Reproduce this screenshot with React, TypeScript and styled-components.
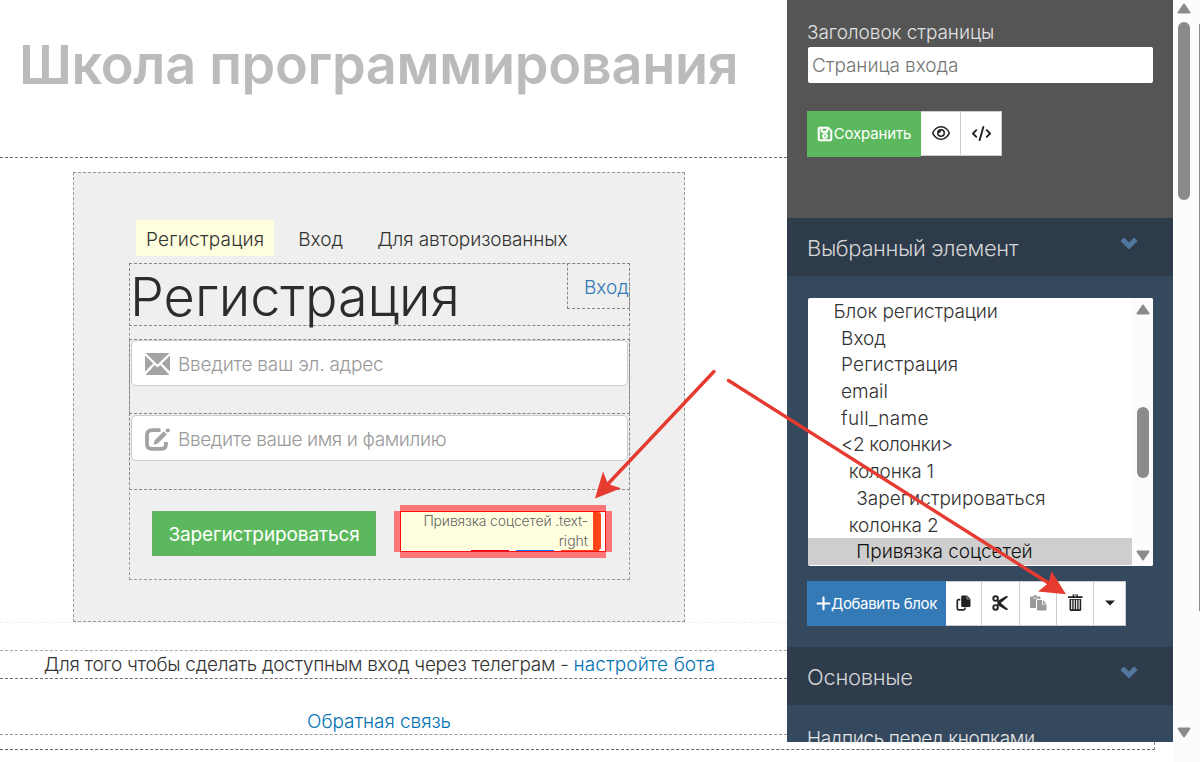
import React from 'react';
import styled, { createGlobalStyle, css } from 'styled-components';
import { FaCode, FaPlus, FaRegEye } from 'react-icons/fa6';
import { FaRegSave } from 'react-icons/fa';

const GlobalStyle = createGlobalStyle`
  * { box-sizing: border-box; }
  body {
    margin: 0;
    overflow: hidden;
    background: #fff;
    color: #333;
    font: 300 19px/27px Inter, "Liberation Sans", sans-serif;
  }
`;

/* Text whose tracking differs from one label to the next */
const Label = styled.span<{ $track?: number }>`
  letter-spacing: ${({ $track = 0 }) => $track}px;
  white-space: nowrap;
`;

const Page = styled.div`
  position: relative;
  width: 1200px;
  height: 762px;
  overflow: hidden;
  background: linear-gradient(to right, #fff 1174px, #fcfcfc 1174px);
`;

const Workspace = styled.div`
  display: flex;
  height: 742px;
  overflow: hidden;
`;

const PageEnd = styled.div`
  width: 1155px;
  height: 8px;
  border-right: 1px dashed #888;
  border-bottom: 1px dashed #666;
`;

/* ---------- edited page ---------- */

const Canvas = styled.main`
  flex: 0 0 787px;
  overflow: hidden;
`;

const TitleBlock = styled.header`
  height: 158px;
  padding: 33px 0 0 19px;
  border-bottom: 1px dashed #6f6f6f;
`;

const SchoolTitle = styled.h1`
  margin: 0;
  color: #bbb;
  font-size: 54px;
  font-weight: 600;
  line-height: 64px;
`;

const Card = styled.section`
  width: 612px;
  height: 450px;
  margin: 14px 0 0 73px;
  padding: 47px 0 0 55px;
  border: 1px dashed #999;
  background: #efefef;
`;

const Tabs = styled.nav`
  display: flex;
  gap: 14px;
  height: 36px;
  margin-left: 7px;
`;

const Tab = styled.div<{ $active?: boolean }>`
  padding: 6px 10px 0;
  background: ${({ $active }) => ($active ? '#ffffdf' : 'transparent')};
`;

const Form = styled.div`
  width: 501px;
  height: 317px;
  margin-top: 7px;
  border: 1px dashed #999;
`;

const FormHeading = styled.div`
  display: flex;
  justify-content: space-between;
  height: 63px;
  margin: -1px -1px 0;
  border: 1px dashed #888;
`;

const Heading = styled.h2`
  margin: 1px 0 0;
  color: #2c2c2c;
  font-size: 54px;
  font-weight: 300;
  line-height: 64px;
`;

const LoginLink = styled.div`
  width: 63px;
  height: 46px;
  margin: -1px -1px 0 0;
  padding: 10px 0 0 16px;
  border: 1px dashed #888;
  color: #337ab7;
`;

const FieldBlock = styled.div<{ $first?: boolean }>`
  height: ${({ $first }) => ($first ? 75 : 77)}px;
  margin: ${({ $first }) => ($first ? 13 : -1)}px -1px 0;
  padding: ${({ $first }) => ($first ? 0 : 1)}px 1px 0;
  border: 1px dashed #888;
`;

const Field = styled.div`
  display: flex;
  align-items: center;
  gap: 8px;
  height: 46px;
  padding: 2px 0 0 13px;
  border: 1px solid #ccc;
  border-radius: 5px;
  background: #fff;
  color: #999;

  svg {
    flex: 0 0 25px;
  }
`;

const FormActions = styled.div`
  display: flex;
  align-items: flex-start;
  justify-content: space-between;
  padding: 15px 17px 0 22px;
`;

const SubmitButton = styled.div`
  width: 224px;
  height: 45px;
  margin-top: 6px;
  border: 1px dashed #6fa56f;
  background: #5cb85c;
  color: #fff;
  font-weight: 400;
  line-height: 45px;
  text-align: center;
`;

/* Selected element: thick translucent bars around a thin red frame */
const Selection = styled.div`
  display: grid;
  grid-template: 6px 41px 6px / 6px 206px 6px;
`;

const Bar = styled.div<{ $area: string }>`
  grid-area: ${({ $area }) => $area};
  background: #fb7676;
`;

const SelectedBox = styled.div`
  grid-area: 2 / 2;
  display: grid;
  grid-template: 38px 1px / 192px 8px;
  border: 1px solid #fb1010;
  background: #fff;
`;

const SelectedHint = styled.div`
  padding-right: 5px;
  background: #ffffdf;
  color: #666;
  font-size: 14px;
  line-height: 19px;
  text-align: right;

  > :first-child {
    position: relative;
    top: -1px;
  }
`;

const SocialEdge = styled.div`
  border-radius: 0 3px 3px 0;
  background: #ff4518;
`;

const SocialStrip = styled.div`
  display: grid;
  grid-template-columns: 38px 38px 38px;
  gap: 7px;
  margin-left: 70px;
`;

const SocialTip = styled.div<{ $color: string }>`
  background: ${({ $color }) => $color};
`;

const CardEnd = styled.div`
  border-top: 1px dashed #eee;
`;

const BotNotice = styled.div`
  height: 29px;
  margin-top: 27px;
  padding-right: 28px;
  border-top: 1px dashed #aaa;
  border-bottom: 1px dashed #6f6f6f;
  text-align: center;
`;

const Feedback = styled.div`
  height: 56px;
  padding: 29px 29px 0 0;
  border-bottom: 1px dashed #999;
  text-align: center;
`;

const Link = styled.a`
  color: #0071b3;
  text-decoration: none;
`;

/* ---------- settings panel ---------- */

const Panel = styled.aside`
  flex: 0 0 386px;
  display: flex;
  flex-direction: column;
  background: #34495e;
`;

const PageSettings = styled.div`
  flex: 0 0 218px;
  padding: 19px 20px 0;
  background: #555;
  color: #e2e2e2;
`;

const TitleInput = styled.div`
  height: 36px;
  margin: 1px 0 28px 1px;
  padding: 5px 0 0 4px;
  border-radius: 2px;
  background: #fff;
  color: #757575;
`;

const SectionHeader = styled.div`
  flex: 0 0 58px;
  display: flex;
  justify-content: space-between;
  padding: 15px 35px 0 20px;
  background: #2d3b4b;
  color: #d5d5d5;
  font-size: 22px;
  line-height: 30px;
`;

const Chevron = styled.svg`
  width: 18px;
  height: 13px;
  margin-top: 4px;
`;

const ElementPicker = styled.div`
  flex: 0 0 268px;
  display: flex;
  margin: 22px 20px 0 21px;
  border-radius: 2px;
  background: #fff;
  overflow: hidden;
`;

const Options = styled.div`
  flex: 1;
`;

const Option = styled.div<{ $level: number; $selected?: boolean }>`
  height: 26.7px;
  padding-left: ${({ $level }) => 25.5 + $level * 7.6}px;
  line-height: 28.4px;
  ${({ $selected }) =>
    $selected &&
    css`
      background: #cecece;
      color: #111;
    `}
`;

const PickerScroll = styled.div`
  flex: 0 0 21px;
  display: flex;
  flex-direction: column;
  align-items: center;
  padding: 6px 0 5px;
  background: #fcfcfc;
`;

const Thumb = styled.div<{ $gap: number; $length: number }>`
  width: 12px;
  height: ${({ $length }) => $length}px;
  margin-top: ${({ $gap }) => $gap}px;
  margin-bottom: auto;
  border-radius: 6px;
  background: #8b8b8b;
`;

const ButtonRow = styled.div`
  display: flex;
  align-items: flex-start;
  color: #222;
`;

const ElementButtons = styled(ButtonRow)`
  flex: 0 0 66px;
  margin: 15px 20px 0;
`;

const ColorButton = styled.div<{ $color: string; $width: number; $height: number }>`
  display: flex;
  align-items: center;
  justify-content: center;
  gap: 1px;
  width: ${({ $width }) => $width}px;
  height: ${({ $height }) => $height}px;
  background: ${({ $color }) => $color};
  color: #fff;
  font-size: 15px;
  font-weight: 400;
`;

const SaveButton = styled(ColorButton)`
  padding-bottom: 1px;

  svg {
    stroke: #fff;
    stroke-width: 18px;
  }
`;

const AddButton = styled(ColorButton)`
  gap: 0;

  svg {
    flex: 0 0 15px;
  }
`;

const IconButton = styled.div<{ $width: number }>`
  display: flex;
  align-items: center;
  justify-content: center;
  width: ${({ $width }) => $width}px;
  height: 45px;
  padding-bottom: 1px;
  border: 1px solid #ccc;
  border-left-width: 0;
  background: #fff;
`;

const FieldLabel = styled.div`
  padding: 20px 20px 0;
  color: #e6e6e6;
`;

const PageScroll = styled.div`
  flex: 0 0 20px;
  display: flex;
  flex-direction: column;
  align-items: center;
  margin-left: 1px;
  padding: 3px 0 4px;
`;

const OuterScroll = styled.div`
  width: 1px;
  height: 587px;
  margin: 24px 0 0 5px;
  background: #8b8b8b;
`;

const Arrows = styled.svg`
  position: absolute;
  inset: 0;
  pointer-events: none;
`;

const ScrollArrow = ({ down }: { down?: boolean }) => (
  <svg width="14" height="11" viewBox="0 0 14 11">
    <path
      d={down ? 'M1.5 1.5h11L7 9.5z' : 'M1.5 9.5h11L7 1.5z'}
      fill="#8b8b8b"
      stroke="#8b8b8b"
      strokeWidth="2"
      strokeLinejoin="round"
    />
  </svg>
);

const ChevronDown = () => (
  <Chevron viewBox="0 0 18 13">
    <path d="M.4 4L4 .4l5 5 5-5L17.600 4 9 12.400z" fill="#52779f" />
  </Chevron>
);

const EnvelopeIcon = () => (
  <svg width="25" height="22" viewBox="0 0 25 22" fill="#a3a3a3">
    <path d="M.5 0h24L12.500 11.500z" />
    <path d="M0 2.500L8.200 10.500 0 18.500z" />
    <path d="M25 2.500L16.800 10.500 25 18.500z" />
    <path d="M.5 22L9.700 12l2.800 2.600 2.800-2.600 9.200 10z" />
  </svg>
);

const EditIcon = () => (
  <svg width="25" height="23" viewBox="0 0 25 23">
    <path
      d="M15.500 2.200H7Q2 2.200 2 7v9.300q0 4.500 4.500 4.500h10q4.500 0 4.500-4.500V14"
      fill="none"
      stroke="#a3a3a3"
      strokeWidth="3.800"
    />
    <path d="M8.500 16.800l1.200-4.500L18.800 3.300l3.100 3.100-9.200 9z" fill="#a3a3a3" />
    <circle cx="22.800" cy="2.500" r="2.100" fill="#a3a3a3" />
  </svg>
);

const CopyIcon = () => (
  <svg width="15" height="17" viewBox="0 0 15 17">
    <path d="M6.500.5H11l3.500 3.500v6.700q0 1.300-1.300 1.300H6.500q-1.300 0-1.300-1.300V1.800Q5.200.5 6.500.5z" fill="#222" />
    <path d="M4.300 4.700H2.500Q1.300 4.700 1.300 6v7.600q0 1.300 1.200 1.300h5.200q1.300 0 1.300-1.300v-1" fill="none" stroke="#222" strokeWidth="1.700" />
    <path d="M11 .5V4h3.500" fill="none" stroke="#fff" strokeWidth=".5" />
  </svg>
);

const CutIcon = () => (
  <svg width="17" height="16" viewBox="0 0 17 16">
    <g fill="none" stroke="#222" strokeWidth="1.900">
      <circle cx="3.600" cy="3.600" r="2.300" />
      <circle cx="3.600" cy="12.400" r="2.300" />
    </g>
    <path d="M5 6.200L13.600 1.200q1.600-.6 2.600.6L6.400 10z" fill="#222" />
    <path d="M5 9.800l8.600 5q1.600.6 2.600-.6L6.400 6z" fill="#222" />
  </svg>
);

const PasteIcon = () => (
  <svg width="17" height="16" viewBox="0 0 17 16" fill="#999">
    <path d="M1 1.500h2.300Q3.600 0 5.300 0T7.300 1.500h2.200q1 0 1 1V4H7.500Q6 4 6 5.500V13H1q-1 0-1-1V2.500q0-1 1-1z" />
    <path d="M8 5h4v4.500h4.500v5q0 1-1 1H8q-1 0-1-1V6q0-1 1-1z" />
    <path d="M12.800 5l3.700 3.700h-3.700z" />
    <path d="M3 3.200h4.800" stroke="#fff" strokeWidth=".8" />
  </svg>
);

const TrashIcon = () => (
  <svg width="15" height="18" viewBox="0 0 15 18">
    <path d="M0 2.200h4.600V.4h5.300v1.800h4.600v1.900H0zM6 1.300v.9h2.600v-.9z" fill="#222" fillRule="evenodd" />
    <path d="M1.500 5h11.700v10.800q0 1.200-1.200 1.200H2.700q-1.200 0-1.200-1.200z" fill="#222" />
    <path d="M3.700 5.800v9.400M6.200 5.800v9.400M8.700 5.800v9.400M11.100 5.800v9.400" stroke="#fff" strokeWidth="1.100" />
  </svg>
);

const CaretIcon = () => (
  <svg width="10" height="6" viewBox="0 0 10 6">
    <path d="M0 .5h10L5 5.500z" fill="#222" />
  </svg>
);

const options = [
  { text: 'Блок регистрации', level: 0, track: -0.1 },
  { text: 'Вход', level: 1 },
  { text: 'Регистрация', level: 1, track: 0.1 },
  { text: 'email', level: 1 },
  { text: 'full_name', level: 1, track: 0.3 },
  { text: '<2 колонки>', level: 1, track: -0.45 },
  { text: 'колонка 1', level: 2, track: -0.2 },
  { text: 'Зарегистрироваться', level: 3 },
  { text: 'колонка 2', level: 2, track: -0.15 },
  { text: 'Привязка соцсетей', level: 3, track: -0.05, selected: true },
];

export default function App() {
  return (
    <Page>
      <GlobalStyle />
      <Workspace>
        <Canvas>
          <TitleBlock>
            <SchoolTitle>
              <Label $track={-0.3}>Школа программирования</Label>
            </SchoolTitle>
          </TitleBlock>

          <Card>
            <Tabs>
              <Tab $active>
                <Label $track={0.2}>Регистрация</Label>
              </Tab>
              <Tab>
                <Label>Вход</Label>
              </Tab>
              <Tab>
                <Label $track={-0.1}>Для авторизованных</Label>
              </Tab>
            </Tabs>

            <Form>
              <FormHeading>
                <Heading>Регистрация</Heading>
                <LoginLink>Вход</LoginLink>
              </FormHeading>
              <FieldBlock $first>
                <Field>
                  <EnvelopeIcon />
                  <Label $track={-0.23}>Введите ваш эл. адрес</Label>
                </Field>
              </FieldBlock>
              <FieldBlock>
                <Field>
                  <EditIcon />
                  <Label $track={-0.38}>Введите ваше имя и фамилию</Label>
                </Field>
              </FieldBlock>
              <FormActions>
                <SubmitButton>
                  <Label $track={-0.12}>Зарегистрироваться</Label>
                </SubmitButton>
                <Selection>
                  <Bar $area="1 / 2" />
                  <Bar $area="2 / 1" />
                  <SelectedBox>
                    <SelectedHint>
                      <Label $track={-0.15}>Привязка соцсетей .text-</Label>
                      <br />
                      <Label>right</Label>
                    </SelectedHint>
                    <SocialEdge />
                    <SocialStrip>
                      <SocialTip $color="#e4002b" />
                      <SocialTip $color="#0a7cff" />
                      <SocialTip $color="#ff4518" />
                    </SocialStrip>
                  </SelectedBox>
                  <Bar $area="2 / 3" />
                  <Bar $area="3 / 2" />
                </Selection>
              </FormActions>
            </Form>
          </Card>

          <CardEnd />
          <BotNotice>
            <Label $track={-0.28}>Для того чтобы сделать доступным вход через телеграм - </Label>
            <Link>
              <Label $track={0.1}>настройте бота</Label>
            </Link>
          </BotNotice>
          <Feedback>
            <Link>
              <Label $track={-0.05}>Обратная связь</Label>
            </Link>
          </Feedback>
        </Canvas>

        <Panel>
          <PageSettings>
            <Label $track={-0.05}>Заголовок страницы</Label>
            <TitleInput>
              <Label $track={-0.05}>Страница входа</Label>
            </TitleInput>
            <ButtonRow>
              <SaveButton $color="#5cb85c" $width={114} $height={46}>
                <FaRegSave size={16} />
                <Label $track={-0.15}>Сохранить</Label>
              </SaveButton>
              <IconButton $width={40}>
                <FaRegEye size={18} />
              </IconButton>
              <IconButton $width={41}>
                <FaCode size={19} />
              </IconButton>
            </ButtonRow>
          </PageSettings>

          <SectionHeader>
            <Label $track={-0.4}>Выбранный элемент</Label>
            <ChevronDown />
          </SectionHeader>

          <ElementPicker>
            <Options>
              {options.map((o) => (
                <Option key={o.text} $level={o.level} $selected={o.selected}>
                  <Label $track={o.track}>{o.text}</Label>
                </Option>
              ))}
            </Options>
            <PickerScroll>
              <ScrollArrow />
              <Thumb $gap={92} $length={71} />
              <ScrollArrow down />
            </PickerScroll>
          </ElementPicker>

          <ElementButtons>
            <AddButton $color="#337ab7" $width={139} $height={45}>
              <FaPlus size={17} />
              <Label $track={-0.33}>Добавить блок</Label>
            </AddButton>
            <IconButton $width={36}>
              <CopyIcon />
            </IconButton>
            <IconButton $width={38}>
              <CutIcon />
            </IconButton>
            <IconButton $width={37}>
              <PasteIcon />
            </IconButton>
            <IconButton $width={37}>
              <TrashIcon />
            </IconButton>
            <IconButton $width={32}>
              <CaretIcon />
            </IconButton>
          </ElementButtons>

          <SectionHeader>
            <Label $track={-0.3}>Основные</Label>
            <ChevronDown />
          </SectionHeader>
          <FieldLabel>
            <Label $track={-0.35}>Надпись перед кнопками</Label>
          </FieldLabel>
        </Panel>

        <PageScroll>
          <ScrollArrow />
          <Thumb $gap={8} $length={178} />
          <ScrollArrow down />
        </PageScroll>
        <OuterScroll />
      </Workspace>
      <PageEnd />

      <Arrows width="1200" height="762" viewBox="0 0 1200 762">
        <g stroke="#e63b30" strokeWidth="3.400" strokeLinecap="round">
          <path d="M714 371.500L606 486" />
          <path d="M728.500 380.500L1050 584" />
        </g>
        <g fill="#e63b30">
          <path d="M595 498.500L603 471.500 608 484 621 488.300z" />
          <path d="M1066 594.300L1051.500 571 1048.500 583 1038 591.500z" />
        </g>
      </Arrows>
    </Page>
  );
}
